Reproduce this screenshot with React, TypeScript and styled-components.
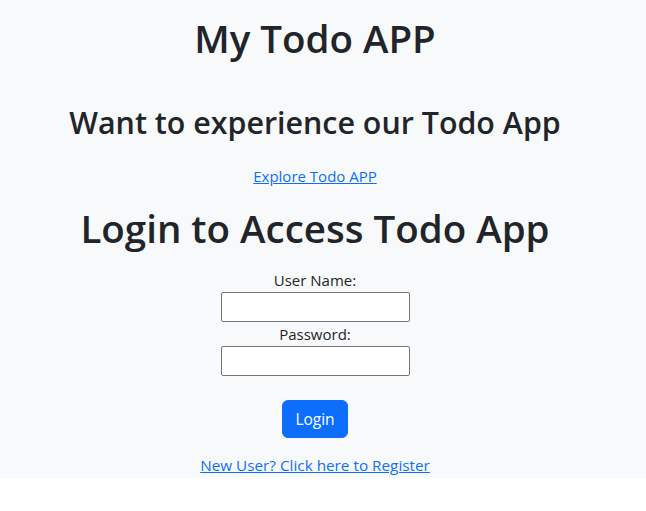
import React from 'react';
import styled, { createGlobalStyle } from 'styled-components';

const GlobalStyle = createGlobalStyle`
  body {
    margin: 0;
    background: #ffffff;
    font-family: "Open Sans", "Liberation Sans", sans-serif;
    color: #212529;
  }
`;

const Page = styled.div`
  background-color: #f8f9fa;
  min-height: 478px;
  padding-right: 16px;
  display: flex;
  flex-direction: column;
  align-items: center;
  text-align: center;
`;

const Title = styled.h1<{ $top: number }>`
  font-size: 38.5px;
  line-height: 48px;
  font-weight: 600;
  margin: ${(p) => p.$top}px 0 0;
  white-space: nowrap;
`;

const SubTitle = styled.h2`
  font-size: 30.4px;
  line-height: 40px;
  font-weight: 600;
  margin: 41px 0 0;
  white-space: nowrap;
`;

const TextLink = styled.a<{ $top: number; $size: number }>`
  display: block;
  font-size: ${(p) => p.$size}px;
  line-height: 24px;
  color: #0d6efd;
  text-decoration: underline;
  margin-top: ${(p) => p.$top}px;
`;

const LoginForm = styled.form`
  display: flex;
  flex-direction: column;
  align-items: center;
  margin-top: 16px;
`;

const Label = styled.label`
  font-size: 15px;
  line-height: 24px;
  color: #212529;
`;

const Input = styled.input`
  box-sizing: border-box;
  width: 189px;
  height: 30px;
  border: 1px solid #767676;
  border-radius: 2px;
  background: #ffffff;
  padding: 1px 2px;
  font-size: 16px;
`;

const LoginButton = styled.button`
  margin-top: 24px;
  height: 38px;
  padding: 6px 12px;
  border: 1px solid #0d6efd;
  border-radius: 6px;
  background-color: #0d6efd;
  color: #ffffff;
  font-family: inherit;
  font-size: 15.5px;
  line-height: 24px;
`;

const App = () => {
  return (
    <>
      <GlobalStyle />
      <Page>
        <Title $top={14}>My Todo APP</Title>
        <SubTitle>Want to experience our Todo App</SubTitle>
        <TextLink href="#" $top={21} $size={15}>
          Explore Todo APP
        </TextLink>
        <Title $top={16}>Login to Access Todo App</Title>
        <LoginForm onSubmit={(e) => e.preventDefault()}>
          <Label htmlFor="username">User Name:</Label>
          <Input id="username" type="text" />
          <Label htmlFor="password">Password:</Label>
          <Input id="password" type="password" />
          <LoginButton type="submit">Login</LoginButton>
        </LoginForm>
        <TextLink href="#" $top={15} $size={15.3}>
          New User? Click here to Register
        </TextLink>
      </Page>
    </>
  );
};

export default App;
